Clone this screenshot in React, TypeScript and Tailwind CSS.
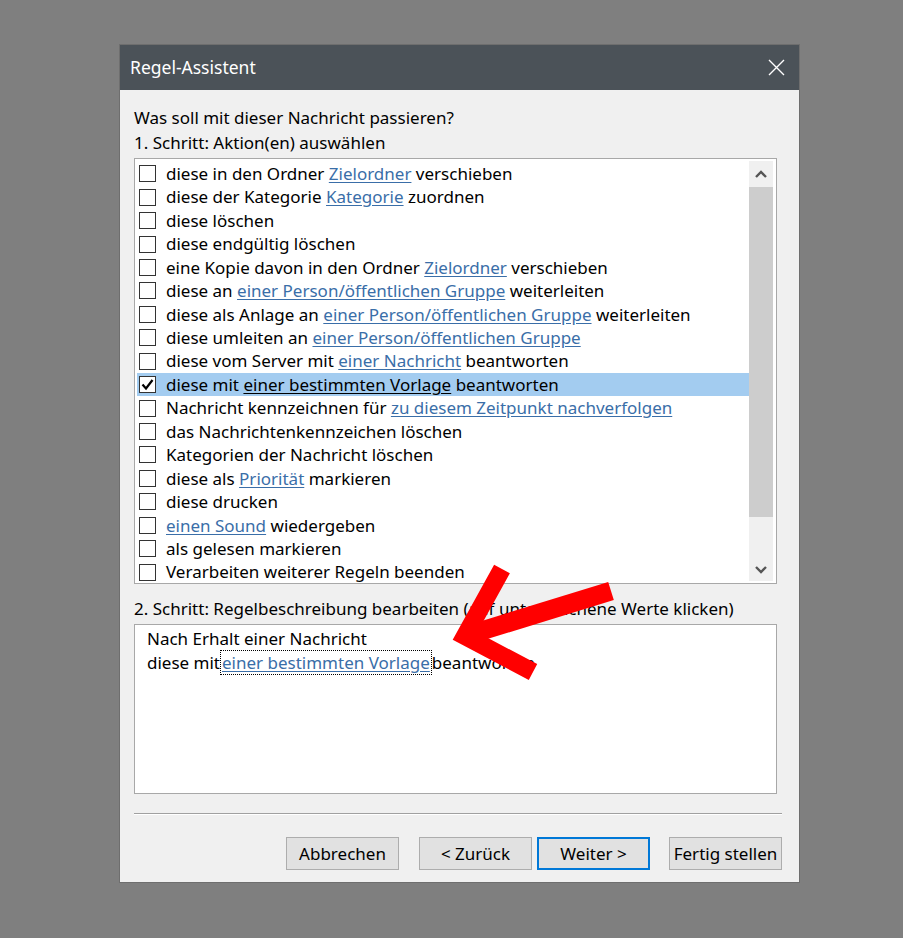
import React from 'react';

type Seg = { t: string; link?: boolean };

const rows: Seg[][] = [
  [{ t: 'diese in den Ordner ' }, { t: 'Zielordner', link: true }, { t: ' verschieben' }],
  [{ t: 'diese der Kategorie ' }, { t: 'Kategorie', link: true }, { t: ' zuordnen' }],
  [{ t: 'diese löschen' }],
  [{ t: 'diese endgültig löschen' }],
  [{ t: 'eine Kopie davon in den Ordner ' }, { t: 'Zielordner', link: true }, { t: ' verschieben' }],
  [{ t: 'diese an ' }, { t: 'einer Person/öffentlichen Gruppe', link: true }, { t: ' weiterleiten' }],
  [{ t: 'diese als Anlage an ' }, { t: 'einer Person/öffentlichen Gruppe', link: true }, { t: ' weiterleiten' }],
  [{ t: 'diese umleiten an ' }, { t: 'einer Person/öffentlichen Gruppe', link: true }],
  [{ t: 'diese vom Server mit ' }, { t: 'einer Nachricht', link: true }, { t: ' beantworten' }],
  [{ t: 'diese mit ' }, { t: 'einer bestimmten Vorlage', link: true }, { t: ' beantworten' }],
  [{ t: 'Nachricht kennzeichnen für ' }, { t: 'zu diesem Zeitpunkt nachverfolgen', link: true }],
  [{ t: 'das Nachrichtenkennzeichen löschen' }],
  [{ t: 'Kategorien der Nachricht löschen' }],
  [{ t: 'diese als ' }, { t: 'Priorität', link: true }, { t: ' markieren' }],
  [{ t: 'diese drucken' }],
  [{ t: 'einen Sound', link: true }, { t: ' wiedergeben' }],
  [{ t: 'als gelesen markieren' }],
  [{ t: 'Verarbeiten weiterer Regeln beenden' }],
];

const SELECTED = 9;

function Checkbox({ checked }: { checked?: boolean }) {
  return (
    <div className="w-[17px] h-[17px] border border-[#333333] bg-white flex items-center justify-center shrink-0">
      {checked && (
        <svg width="13" height="13" viewBox="0 0 13 13">
          <polyline points="1.5,6.5 5,10.5 11.5,2" fill="none" stroke="#000" strokeWidth="2.2" />
        </svg>
      )}
    </div>
  );
}

function Chevron({ up }: { up?: boolean }) {
  return (
    <svg width="12" height="8" viewBox="0 0 12 8">
      <polyline
        points={up ? '1,7 6,2 11,7' : '1,1 6,6 11,1'}
        fill="none"
        stroke="#555"
        strokeWidth="2.4"
      />
    </svg>
  );
}

function Button({ label, focused }: { label: string; focused?: boolean }) {
  return (
    <div
      className={`h-[33px] flex items-center justify-center bg-[#e1e1e1] text-black ${
        focused ? 'border-2 border-[#0078d7]' : 'border border-[#adadad]'
      } w-[113px]`}
    >
      {label}
    </div>
  );
}

export default function App() {
  return (
    <div
      className="relative min-h-screen bg-[#7f7f7f] pt-[44px] pl-[119px] text-[17px] text-black"
      style={{ fontFamily: '"Segoe UI", "Noto Sans", sans-serif' }}
    >
      <div className="w-[681px] h-[839px] bg-[#f0f0f0] border border-[#6e6e6e] flex flex-col">
        {/* title bar */}
        <div className="h-[45px] bg-[#4b5258] flex items-center justify-between pl-[10px] pr-[14px] text-white text-[17.5px]">
          <span>Regel-Assistent</span>
          <svg width="17" height="17" viewBox="0 0 17 17">
            <path d="M1 1 L16 16 M16 1 L1 16" stroke="#fff" strokeWidth="1.4" />
          </svg>
        </div>

        <div className="flex flex-col px-[14px] pt-[15px]">
          <div className="leading-[25px]">Was soll mit dieser Nachricht passieren?</div>
          <div className="leading-[25px]">1. Schritt: Aktion(en) auswählen</div>

          {/* action list */}
          <div className="mt-[3px] w-[643px] h-[426px] bg-white border border-[#a8a8a8] flex pl-[2px] pr-[3px]">
            <div className="flex-1 flex flex-col pt-[3px]">
              {rows.map((segs, i) => {
                const sel = i === SELECTED;
                return (
                  <div
                    key={i}
                    className={`h-[23.45px] flex items-center gap-[10px] pl-[2px] ${sel ? 'bg-[#a3ccf0]' : ''}`}
                  >
                    <Checkbox checked={sel} />
                    <span className="whitespace-pre">
                      {segs.map((s, j) =>
                        s.link ? (
                          <span key={j} className={`underline underline-offset-2 ${sel ? 'text-black' : 'text-[#3a6ea8]'}`}>
                            {s.t}
                          </span>
                        ) : (
                          <span key={j}>{s.t}</span>
                        )
                      )}
                    </span>
                  </div>
                );
              })}
            </div>
            {/* scrollbar */}
            <div className="w-[24px] mt-[2px] mb-[2px] bg-[#f0f0f0] flex flex-col">
              <div className="h-[26px] flex items-center justify-center">
                <Chevron up />
              </div>
              <div className="h-[330px] bg-[#cdcdcd]" />
              <div className="flex-1 flex items-end justify-center pb-[7px]">
                <Chevron />
              </div>
            </div>
          </div>

          <div className="leading-[25px] mt-[12px]">
            2. Schritt: Regelbeschreibung bearbeiten (auf unterstrichene Werte klicken)
          </div>

          {/* description */}
          <div className="mt-[3px] w-[643px] h-[170px] bg-white border border-[#a8a8a8] px-[12px] pt-[2px]">
            <div className="leading-[24px]">Nach Erhalt einer Nachricht</div>
            <div className="leading-[24px] whitespace-pre">
              diese mit
              <span className="border border-dotted border-black px-[1px] text-[#3a6ea8] underline underline-offset-2">
                einer bestimmten Vorlage
              </span>
              beantworten
            </div>
          </div>

          {/* separator */}
          <div className="mt-[19px] w-[648px] h-[2px] border-t border-[#a0a0a0] border-b border-b-white" />

          {/* buttons */}
          <div className="mt-[22px] w-[648px] flex justify-end">
            <Button label="Abbrechen" />
            <div className="w-[20px]" />
            <Button label="< Zurück" />
            <div className="w-[5px]" />
            <Button label="Weiter >" focused />
            <div className="w-[19px]" />
            <Button label="Fertig stellen" />
          </div>
        </div>
      </div>

      {/* red annotation arrow */}
      <svg className="absolute left-0 top-0 pointer-events-none" width="903" height="938" viewBox="0 0 903 938">
        <polyline points="502,569 465,636 533,672" fill="none" stroke="#ff0000" strokeWidth="18" strokeLinejoin="miter" />
        <line x1="465" y1="636" x2="611" y2="591" stroke="#ff0000" strokeWidth="19" />
      </svg>
    </div>
  );
}
